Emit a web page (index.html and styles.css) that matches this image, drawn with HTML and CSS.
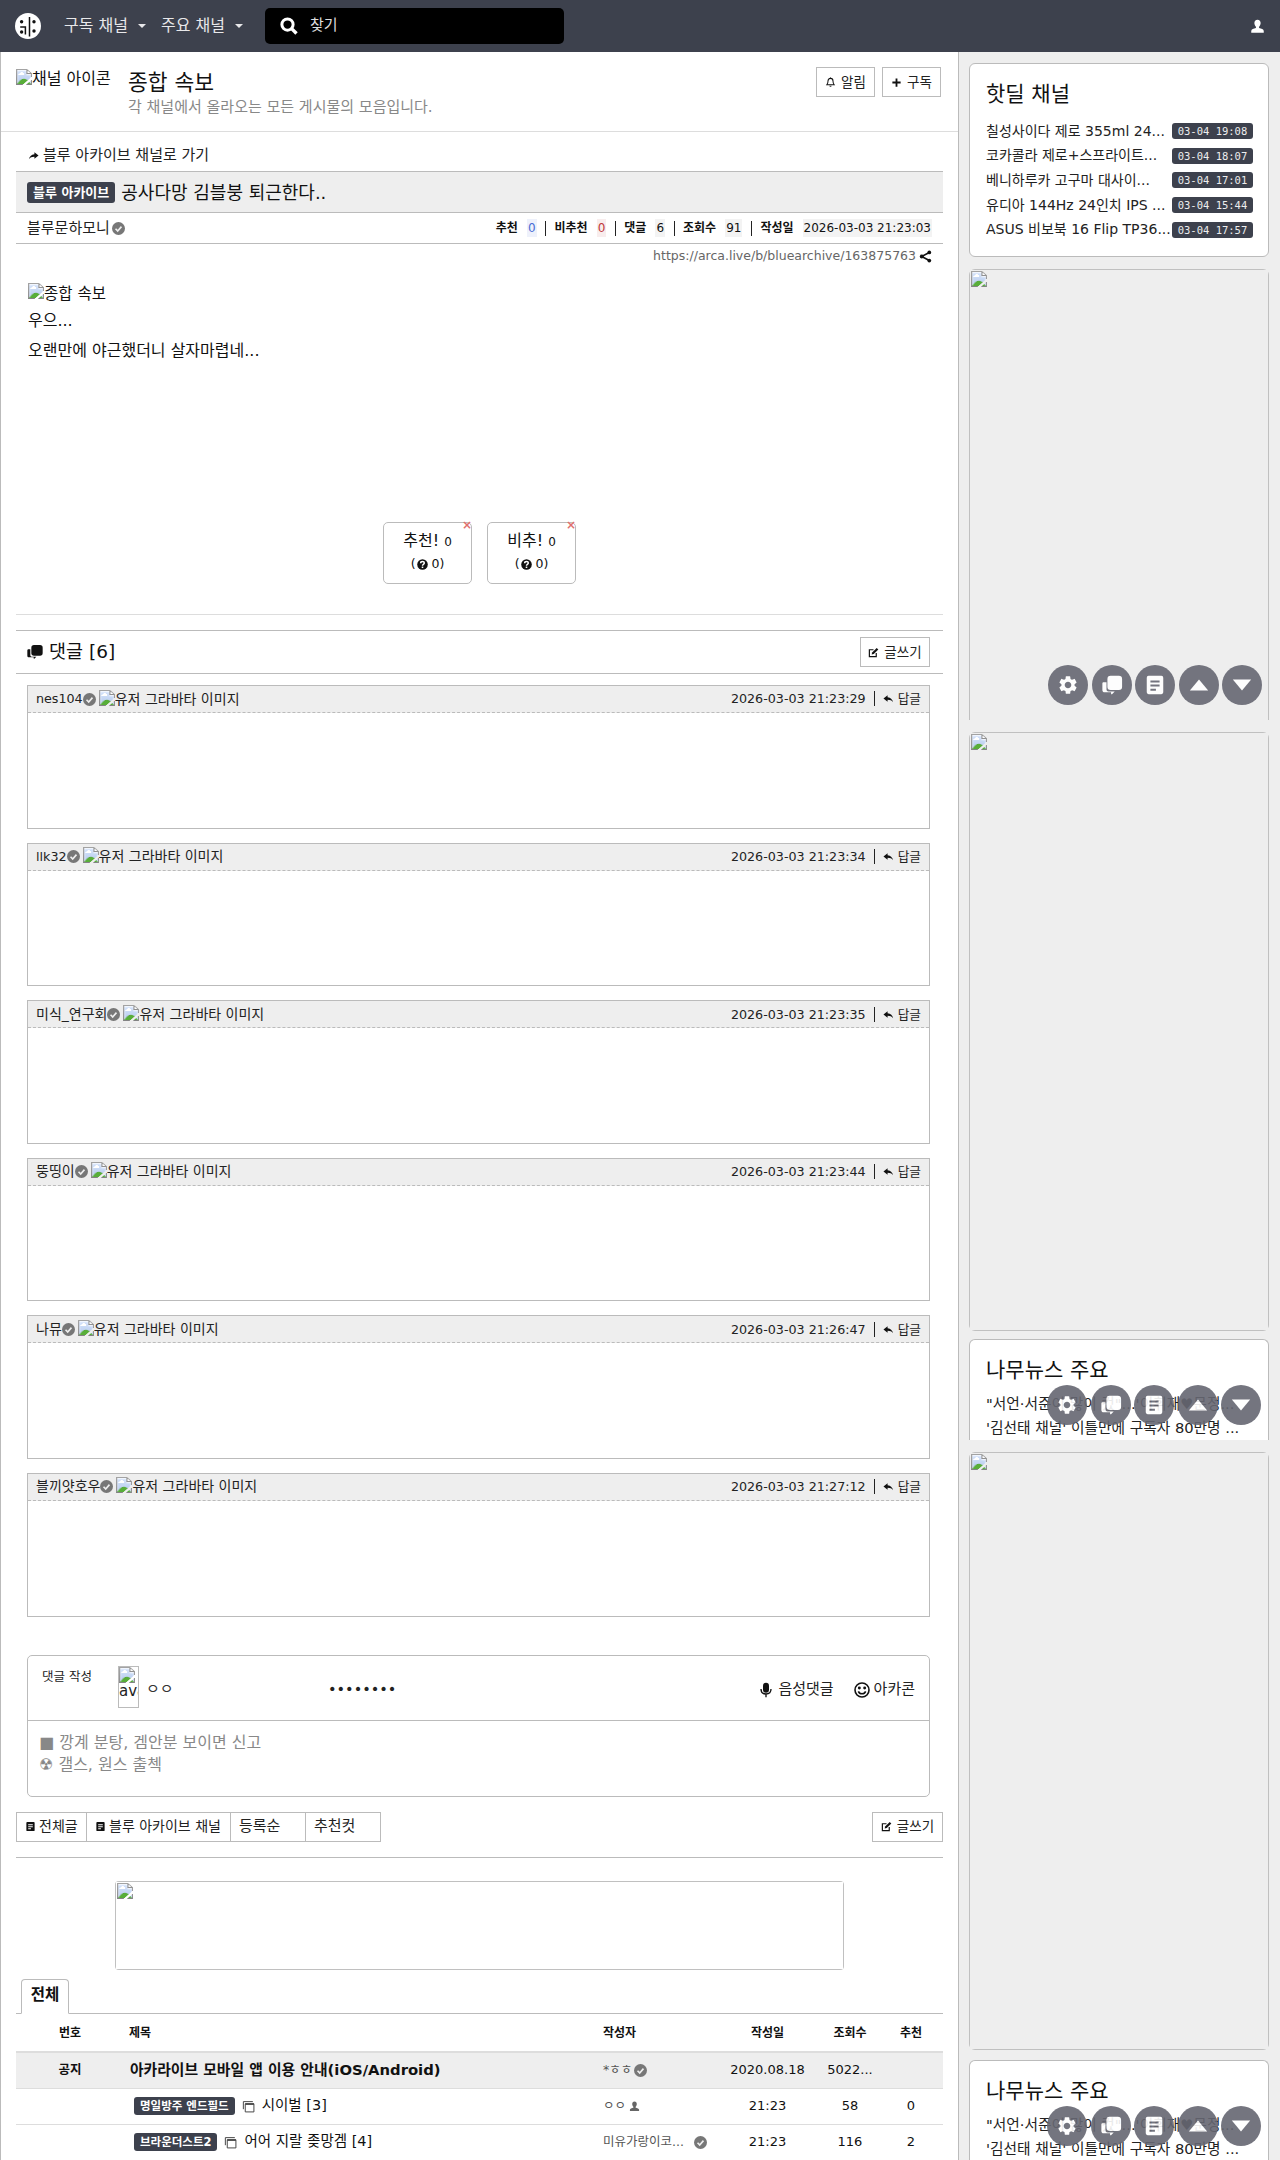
FILE: index.html
```html
<!DOCTYPE html>
<html lang="ko">
<head>
<meta charset="utf-8">
<title>공사다망 김블붕 퇴근한다..</title>
<link rel="stylesheet" href="styles.css">
</head>
<body>
<svg class="sprite" xmlns="http://www.w3.org/2000/svg">
  <symbol id="i-check" viewBox="0 0 24 24"><circle cx="12" cy="12" r="12" fill="#777"/><path d="M6.5 12.5l4 4 7-8" fill="none" stroke="#eee" stroke-width="3"/></symbol>
  <symbol id="i-gear" viewBox="0 0 24 24"><path fill="currentColor" d="M19.14 12.94c.04-.3.06-.61.06-.94 0-.32-.02-.64-.07-.94l2.03-1.58a.49.49 0 0 0 .12-.61l-1.92-3.32a.488.488 0 0 0-.59-.22l-2.39.96c-.5-.38-1.03-.7-1.62-.94l-.36-2.54a.484.484 0 0 0-.48-.41h-3.84c-.24 0-.43.17-.47.41l-.36 2.54c-.59.24-1.13.57-1.62.94l-2.39-.96c-.22-.08-.47 0-.59.22L2.74 8.87c-.12.21-.08.47.12.61l2.03 1.58c-.05.3-.09.63-.09.94s.02.64.07.94l-2.03 1.58a.49.49 0 0 0-.12.61l1.92 3.32c.12.22.37.29.59.22l2.39-.96c.5.38 1.03.7 1.62.94l.36 2.54c.05.24.24.41.48.41h3.84c.24 0 .44-.17.47-.41l.36-2.54c.59-.24 1.13-.56 1.62-.94l2.39.96c.22.08.47 0 .59-.22l1.92-3.32c.12-.22.07-.47-.12-.61l-2.01-1.58zM12 15.6c-1.98 0-3.6-1.62-3.6-3.6s1.62-3.6 3.6-3.6 3.6 1.62 3.6 3.6-1.62 3.6-3.6 3.6z"/></symbol>
  <symbol id="i-doc" viewBox="0 0 24 24"><path fill="currentColor" fill-rule="evenodd" d="M5 2h14a2 2 0 0 1 2 2v16a2 2 0 0 1-2 2H5a2 2 0 0 1-2-2V4a2 2 0 0 1 2-2zm2 5v2.200h10V7H7zm0 4.500v2.200h10v-2.200H7zm0 4.500v2.200h6V16H7z"/></symbol>
  <symbol id="i-up" viewBox="0 0 24 24"><path fill="currentColor" d="M12 6l10 12H2z"/></symbol>
  <symbol id="i-down" viewBox="0 0 24 24"><path fill="currentColor" d="M12 18L2 6h20z"/></symbol>
  <symbol id="i-user" viewBox="0 0 24 24"><path fill="currentColor" d="M12 1c3.300 0 5 2.500 5 5.500 0 2.500-1 4.500-2.500 5.800v2.200c3.500.8 7.500 2 7.500 4.500v3H2v-3c0-2.500 4-3.700 7.500-4.500v-2.200C8 11 7 9 7 6.500 7 3.500 8.700 1 12 1z"/></symbol>
  <symbol id="i-reply" viewBox="0 0 24 24"><path fill="currentColor" d="M10 5L1 12l9 7v-4.500c6 0 9 1.500 12 5.500-1-6-5-10-12-11z"/></symbol>
  <symbol id="i-forward" viewBox="0 0 24 24"><path fill="currentColor" d="M14 5l9 7-9 7v-4.500c-6 0-9 1.500-12 5.500 1-6 5-10 12-11z"/></symbol>
  <symbol id="i-edit" viewBox="0 0 24 24"><path fill="none" stroke="currentColor" stroke-width="2.600" d="M18 13v8H3V6h9"/><path fill="currentColor" d="M9 12L19 2l3.500 3.500-10 10L8 16.500z"/></symbol>
  <symbol id="i-share" viewBox="0 0 24 24"><path fill="none" stroke="currentColor" stroke-width="3" d="M19 4.500L5 12l14 7.500"/><circle cx="19" cy="4.500" r="3.500" fill="currentColor"/><circle cx="5" cy="12" r="3.500" fill="currentColor"/><circle cx="19" cy="19.500" r="3.500" fill="currentColor"/></symbol>
  <symbol id="i-bell" viewBox="0 0 24 24"><path fill="none" stroke="currentColor" stroke-width="2.200" d="M12 3c-3.500 0-5.500 2.500-5.500 6 0 4-1 6-2.500 8h16c-1.500-2-2.500-4-2.500-8 0-3.500-2-6-5.500-6z"/><path fill="currentColor" d="M9.500 19h5a2.500 2.500 0 0 1-5 0zM11 1h2v2h-2z"/></symbol>
  <symbol id="i-plus" viewBox="0 0 24 24"><path fill="currentColor" d="M10 3h4v7h7v4h-7v7h-4v-7H3v-4h7z"/></symbol>
  <symbol id="i-chat" viewBox="0 0 24 24"><path fill="currentColor" d="M3 9h3v8c0 1.200.8 2 2 2h7l-3 3c-.5.400-1 .2-1-.5V20H4c-1.500 0-2.500-1-2.500-2.500V10.500C1.500 9.500 2 9 3 9z"/><rect x="7" y="2" width="16" height="15.500" rx="3.500" fill="currentColor"/></symbol>
  <symbol id="i-help" viewBox="0 0 24 24"><circle cx="12" cy="12" r="11.500" fill="currentColor"/><path fill="none" stroke="#fff" stroke-width="3.200" d="M8 9c0-2.500 2-3.500 4-3.500s4 1.200 4 3.300c0 3-4 3-4 5.700"/><rect x="10.300" y="16.500" width="3.400" height="3.200" fill="#fff"/></symbol>
  <symbol id="i-mic" viewBox="0 0 24 24"><rect x="7.500" y="1" width="9" height="15" rx="4.500" fill="currentColor"/><path fill="none" stroke="currentColor" stroke-width="2" d="M4.500 10.500c0 5 3 7.500 7.500 7.500s7.500-2.500 7.500-7.500M12 18v5"/></symbol>
  <symbol id="i-smile" viewBox="0 0 24 24"><circle cx="12" cy="12" r="10.500" fill="none" stroke="currentColor" stroke-width="2.400"/><circle cx="8" cy="9" r="2.200" fill="currentColor"/><circle cx="16" cy="9" r="2.200" fill="currentColor"/><path fill="none" stroke="currentColor" stroke-width="2.400" d="M6.500 14c1 2.500 3 3.700 5.500 3.700s4.500-1.200 5.500-3.700"/></symbol>
  <symbol id="i-comment-stack" viewBox="0 0 24 24"><path fill="currentColor" d="M2.500 8H5v9c0 1.200.8 2 2 2h7l-3 3c-.5.400-1 .2-1-.5V20H3c-1.500 0-2.500-1-2.500-2.500V10C.5 8.700 1.300 8 2.500 8z"/><rect x="6.500" y="1.500" width="17" height="16" rx="4" fill="currentColor"/></symbol>
  <symbol id="i-frames" viewBox="0 0 24 24"><path fill="none" stroke="currentColor" stroke-width="1.800" d="M6 7h16v15H6zM2.500 17V3H20"/><path fill="currentColor" d="M6 6h16v3H6z"/></symbol>
  <symbol id="i-search" viewBox="0 0 24 24"><circle cx="10" cy="10" r="7.500" fill="none" stroke="currentColor" stroke-width="4"/><path d="M15.500 15.500L22 22" stroke="currentColor" stroke-width="4.500"/></symbol>
  <symbol id="i-logo" viewBox="0 0 26 26"><circle cx="13" cy="13" r="13" fill="#fff"/><path fill="none" stroke="#111" stroke-width="1.500" d="M14.500 4v19.500M5.200 13.900h5.200v7.600"/><circle cx="6.600" cy="8.700" r="1.700" fill="#111"/><circle cx="6.600" cy="19" r="1.700" fill="#111"/><circle cx="19" cy="8.700" r="1.700" fill="#111"/><circle cx="19" cy="18" r="1.700" fill="#111"/></symbol>
</svg>

<nav class="topbar">
  <svg class="logo"><use href="#i-logo"/></svg>
  <a class="nav-link">구독 채널<span class="caret"></span></a>
  <a class="nav-link">주요 채널<span class="caret"></span></a>
  <div class="search"><svg class="search-icon"><use href="#i-search"/></svg><span>찾기</span></div>
  <svg class="nav-user"><use href="#i-user"/></svg>
</nav>

<div class="layout">
  <main class="main">
    <header class="board-head">
      <img class="board-icon" src="missing-icon.png" alt="채널 아이콘">
      <div class="board-text">
        <div class="board-title">종합 속보</div>
        <div class="board-desc">각 채널에서 올라오는 모든 게시물의 모음입니다.</div>
      </div>
      <div class="board-actions">
        <a class="btn btn-head"><svg class="ico"><use href="#i-bell"/></svg>알림</a>
        <a class="btn btn-head"><svg class="ico"><use href="#i-plus"/></svg>구독</a>
      </div>
    </header>

    <div class="back-link"><svg class="ico"><use href="#i-forward"/></svg>블루 아카이브 채널로 가기</div>

    <div class="post-title"><span class="badge">블루 아카이브</span><span>공사다망 김블붕 퇴근한다..</span></div>
    <div class="post-info">
      <div class="post-author">블루문하모니<svg class="check"><use href="#i-check"/></svg></div>
      <div class="post-stats">
        <b>추천</b><span class="num num-up">0</span><i class="sep"></i>
        <b>비추천</b><span class="num num-down">0</span><i class="sep"></i>
        <b>댓글</b><span class="num">6</span><i class="sep"></i>
        <b>조회수</b><span class="num">91</span><i class="sep"></i>
        <b>작성일</b><span class="num">2026-03-03 21:23:03</span>
      </div>
    </div>
    <div class="post-url">https://arca.live/b/bluearchive/163875763<svg class="ico share"><use href="#i-share"/></svg></div>

    <article class="post-body">
      <img class="post-img" src="missing-post.png" alt="종합 속보">
      <p>우으...</p>
      <p>오랜만에 야근했더니 살자마렵네...</p>
    </article>

    <div class="votes">
      <div class="vote"><span class="vote-x">×</span><div class="vote-main">추천! <small>0</small></div><div class="vote-sub">(<svg class="help"><use href="#i-help"/></svg>0)</div></div>
      <div class="vote"><span class="vote-x">×</span><div class="vote-main">비추! <small>0</small></div><div class="vote-sub">(<svg class="help"><use href="#i-help"/></svg>0)</div></div>
    </div>

    <hr class="rule-light">

    <div class="comment-head">
      <div class="comment-title"><svg class="ico-lg"><use href="#i-comment-stack"/></svg>댓글 [6]</div>
      <a class="btn btn-write"><svg class="ico"><use href="#i-edit"/></svg>글쓰기</a>
    </div>

    <section class="comments">
      <div class="comment"><div class="comment-bar"><span class="c-name">nes104</span><svg class="check"><use href="#i-check"/></svg><img class="c-avatar" src="missing-a1.png" alt="유저 그라바타 이미지"><span class="c-right">2026-03-03 21:23:29<i class="sep"></i><svg class="ico"><use href="#i-reply"/></svg>답글</span></div></div>
      <div class="comment"><div class="comment-bar"><span class="c-name">llk32</span><svg class="check"><use href="#i-check"/></svg><img class="c-avatar" src="missing-a2.png" alt="유저 그라바타 이미지"><span class="c-right">2026-03-03 21:23:34<i class="sep"></i><svg class="ico"><use href="#i-reply"/></svg>답글</span></div></div>
      <div class="comment"><div class="comment-bar"><span class="c-name c-name-ko">미식_연구회</span><svg class="check"><use href="#i-check"/></svg><img class="c-avatar" src="missing-a3.png" alt="유저 그라바타 이미지"><span class="c-right">2026-03-03 21:23:35<i class="sep"></i><svg class="ico"><use href="#i-reply"/></svg>답글</span></div></div>
      <div class="comment"><div class="comment-bar"><span class="c-name c-name-ko">뚱띵이</span><svg class="check"><use href="#i-check"/></svg><img class="c-avatar" src="missing-a4.png" alt="유저 그라바타 이미지"><span class="c-right">2026-03-03 21:23:44<i class="sep"></i><svg class="ico"><use href="#i-reply"/></svg>답글</span></div></div>
      <div class="comment"><div class="comment-bar"><span class="c-name c-name-ko">나뮤</span><svg class="check"><use href="#i-check"/></svg><img class="c-avatar" src="missing-a5.png" alt="유저 그라바타 이미지"><span class="c-right">2026-03-03 21:26:47<i class="sep"></i><svg class="ico"><use href="#i-reply"/></svg>답글</span></div></div>
      <div class="comment"><div class="comment-bar"><span class="c-name c-name-ko">블끼얏호우</span><svg class="check"><use href="#i-check"/></svg><img class="c-avatar" src="missing-a6.png" alt="유저 그라바타 이미지"><span class="c-right">2026-03-03 21:27:12<i class="sep"></i><svg class="ico"><use href="#i-reply"/></svg>답글</span></div></div>
    </section>

    <section class="editor">
      <div class="editor-top">
        <span class="editor-label">댓글 작성</span>
        <img class="editor-avatar" src="missing-av.png" alt="avatar">
        <span class="editor-nick">ㅇㅇ</span>
        <span class="editor-dots">••••••••</span>
        <span class="editor-tool"><svg class="ico-md"><use href="#i-mic"/></svg>음성댓글</span>
        <span class="editor-tool"><svg class="ico-md"><use href="#i-smile"/></svg>아카콘</span>
      </div>
      <div class="editor-body">
        <div>■ 깡계 분탕, 겜안분 보이면 신고</div>
        <div>☢ 갤스, 원스 출첵</div>
      </div>
    </section>

    <div class="list-tools">
      <a class="tool tool-a"><svg class="ico"><use href="#i-doc"/></svg>전체글</a>
      <a class="tool tool-b"><svg class="ico"><use href="#i-doc"/></svg>블루 아카이브 채널</a>
      <a class="tool tool-c">등록순</a>
      <a class="tool tool-c">추천컷</a>
      <a class="btn btn-write tools-write"><svg class="ico"><use href="#i-edit"/></svg>글쓰기</a>
    </div>

    <hr class="rule-mid">

    <div class="banner"><img src="missing-banner.png"></div>

    <div class="tabs"><span class="tab">전체</span></div>

    <div class="table">
      <div class="row row-head"><span class="cell-c">번호</span><span class="cell-t">제목</span><span class="cell-a">작성자</span><span class="cell-c">작성일</span><span class="cell-c">조회수</span><span class="cell-c">추천</span></div>
      <div class="row row-notice"><span class="cell-c cell-bold">공지</span><span class="cell-t cell-notice">아카라이브 모바일 앱 이용 안내(iOS/Android)</span><span class="cell-a">*ㅎㅎ<svg class="check"><use href="#i-check"/></svg></span><span class="cell-c">2020.08.18</span><span class="cell-c">5022...</span><span class="cell-c"></span></div>
      <div class="row"><span class="cell-c"></span><span class="cell-t"><span class="badge badge-row">명일방주 엔드필드</span><svg class="ico-row"><use href="#i-frames"/></svg>시이벌 [3]</span><span class="cell-a">ㅇㅇ<svg class="ico user-mini"><use href="#i-user"/></svg></span><span class="cell-c">21:23</span><span class="cell-c">58</span><span class="cell-c">0</span></div>
      <div class="row"><span class="cell-c"></span><span class="cell-t"><span class="badge badge-row">브라운더스트2</span><svg class="ico-row"><use href="#i-frames"/></svg>어어 지랄 좆망겜 [4]</span><span class="cell-a">미유가랑이코...<svg class="check check-far"><use href="#i-check"/></svg></span><span class="cell-c">21:23</span><span class="cell-c">116</span><span class="cell-c">2</span></div>
    </div>
  </main>

  <aside class="side">
    <div class="card card-deal">
      <h3 class="card-title">핫딜 채널</h3>
      <div class="deal"><span class="deal-t">칠성사이다 제로 355ml 24...</span><span class="deal-d">03-04 19:08</span></div>
      <div class="deal"><span class="deal-t">코카콜라 제로+스프라이트...</span><span class="deal-d">03-04 18:07</span></div>
      <div class="deal"><span class="deal-t">베니하루카 고구마 대사이...</span><span class="deal-d">03-04 17:01</span></div>
      <div class="deal"><span class="deal-t">유디아 144Hz 24인치 IPS ...</span><span class="deal-d">03-04 15:44</span></div>
      <div class="deal"><span class="deal-t">ASUS 비보북 16 Flip TP36...</span><span class="deal-d">03-04 17:57</span></div>
    </div>

    <div class="card card-ad card-ad-a"><img src="missing-ad1.png">
      <div class="fabs"><span class="fab"><svg><use href="#i-gear"/></svg></span><span class="fab"><svg><use href="#i-chat"/></svg></span><span class="fab"><svg><use href="#i-doc"/></svg></span><span class="fab"><svg><use href="#i-up"/></svg></span><span class="fab"><svg><use href="#i-down"/></svg></span></div>
    </div>
    <div class="card card-ad card-ad-b"><img src="missing-ad2.png"></div>

    <div class="card card-news">
      <h3 class="card-title">나무뉴스 주요</h3>
      <div class="news">"서언·서준이 많이 컸"...'이휘재♥문정...</div>
      <div class="news">'김선태 채널' 이틀만에 구독자 80만명 ...</div>
      <div class="fabs"><span class="fab"><svg><use href="#i-gear"/></svg></span><span class="fab"><svg><use href="#i-chat"/></svg></span><span class="fab"><svg><use href="#i-doc"/></svg></span><span class="fab"><svg><use href="#i-up"/></svg></span><span class="fab"><svg><use href="#i-down"/></svg></span></div>
    </div>

    <div class="card card-ad card-ad-c"><img src="missing-ad3.png"></div>

    <div class="card card-news card-news-last">
      <h3 class="card-title">나무뉴스 주요</h3>
      <div class="news">"서언·서준이 많이 컸"...'이휘재♥문정...</div>
      <div class="news">'김선태 채널' 이틀만에 구독자 80만명 ...</div>
      <div class="fabs"><span class="fab"><svg><use href="#i-gear"/></svg></span><span class="fab"><svg><use href="#i-chat"/></svg></span><span class="fab"><svg><use href="#i-doc"/></svg></span><span class="fab"><svg><use href="#i-up"/></svg></span><span class="fab"><svg><use href="#i-down"/></svg></span></div>
    </div>
  </aside>
</div>
</body>
</html>
```

FILE: styles.css
```css
* { box-sizing: border-box; }
html, body { margin: 0; padding: 0; }
body {
  height: 2160px;
  overflow: hidden;
  background: #eee;
  color: #111;
  font-family: "DejaVu Sans", "Noto Sans CJK KR", sans-serif;
  font-size: 14px;
  line-height: 1.5;
}
.sprite { display: none; }
svg { flex: none; }

/* top bar */
.topbar {
  height: 52px;
  background: #3d414d;
  color: #fff;
  display: flex;
  align-items: center;
  padding-left: 15px;
}
.logo { width: 26px; height: 26px; margin-right: 23px; }
.nav-link { display: flex; align-items: center; font-size: 16px; color: #e8e8ea; margin-right: 15px; }
.caret {
  width: 0; height: 0; margin-left: 10px; margin-top: -1px;
  border-left: 4px solid transparent; border-right: 4px solid transparent; border-top: 4px solid #e8e8ea;
}
.search {
  width: 299px; height: 36px; margin-left: 7px;
  background: #000; border-radius: 5px;
  display: flex; align-items: center; padding-left: 15px;
  font-size: 15px; color: #ddd;
}
.search span { margin-top: -2px; }
.search-icon { width: 18px; height: 18px; color: #fff; margin-right: 12px; }
.nav-user { width: 15px; height: 15px; color: #fff; margin-left: auto; margin-right: 15px; }

/* layout */
.layout { display: flex; align-items: flex-start; height: 2108px; }
.main {
  width: 959px; height: 2108px; flex: none;
  background: #fff;
  border-left: 1px solid #bbb; border-right: 1px solid #bbb;
  padding: 0 15px;
  overflow: hidden;
}
.side { flex: 1; padding: 11px 11px 0 10px; min-width: 0; }

/* board header */
.board-head {
  height: 80px; margin: 0 -15px; padding: 14px 15px 0;
  border-bottom: 1px solid #ddd;
  display: flex; align-items: flex-start;
}
.board-icon { width: 95px; height: 20px; overflow: hidden; font-size: 16px; line-height: 20px; display: block; margin-top: 3px; }
.board-text { margin-left: 17px; }
.board-title { font-size: 21.500px; line-height: 28px; margin-top: 3px; }
.board-desc { font-size: 15px; line-height: 20px; color: #888; white-space: nowrap; }
.board-actions { margin-left: auto; display: flex; gap: 7px; margin-top: 1px; margin-right: 2px; }
.btn {
  height: 30px; border: 1px solid #bbb; background: #fff;
  display: inline-flex; align-items: center; justify-content: center;
  font-size: 13.500px; color: #222;
}
.btn-head { width: 59px; }
.btn .ico { margin-right: 5px; }
.ico { width: 11px; height: 11px; color: #111; }
.ico-lg { width: 16px; height: 16px; color: #111; margin-right: 6px; }
.ico-md { width: 16px; height: 16px; color: #111; margin-right: 4px; }

.back-link { height: 39px; padding: 7px 0 0 12px; display: flex; align-items: center; font-size: 15px; color: #222; }
.back-link .ico { margin-right: 4px; }

.post-title {
  height: 42px; background: #eee;
  border-top: 1px solid #bbb; border-bottom: 1px solid #bbb;
  display: flex; align-items: center; padding-left: 11px;
  font-size: 18px;
}
.badge {
  background: #3d414d; color: #fff; font-size: 13px; font-weight: 700;
  height: 21px; line-height: 21px; border-radius: 3px; padding: 0 6px;
  margin-right: 6px; display: inline-block; white-space: nowrap;
}
.post-info {
  height: 31px; border-bottom: 1px solid #bbb;
  display: flex; align-items: center; justify-content: space-between;
  padding: 0 11px;
  font-size: 15px;
}
.post-author { display: flex; align-items: center; color: #222; }
.check { width: 13px; height: 13px; margin-left: 2px; }
.post-stats { display: flex; align-items: center; font-size: 12px; }
.post-stats b { font-weight: 700; font-size: 12px; }
.num { margin-left: 9px; background: #f3f3f3; padding: 0 1px; }
.num-up { color: #4a6cd4; background: #eef1fb; }
.num-down { color: #c0393b; background: #f8eded; }
.sep { display: inline-block; width: 1px; height: 15px; background: #222; margin: 0 8.500px; }

.post-url { height: 25px; display: flex; align-items: center; justify-content: flex-end; padding-right: 11px; font-size: 12.500px; color: #666; }
.share { width: 13px; height: 13px; margin-left: 3px; }

.post-body { padding: 14px 12px 0; height: 253px; font-size: 16px; }
.post-img { display: block; height: 22px; line-height: 22px; font-size: 15.500px; margin-bottom: 5px; }
.post-body p { margin: 0 0 9px; line-height: 21px; }

.votes { display: flex; justify-content: center; gap: 15px; height: 62px; }
.vote {
  width: 89px; height: 62px; position: relative;
  border: 1px solid #bbb; border-radius: 5px;
  text-align: center;
  padding-top: 6px;
}
.vote-main { font-size: 16px; line-height: 24px; }
.vote-main small { font-size: 12px; }
.vote-sub { font-size: 12.500px; line-height: 20px; display: flex; justify-content: center; align-items: center; }
.help { width: 11px; height: 11px; color: #111; margin: 0 4px 0 1px; }
.vote-x { position: absolute; top: -7px; right: -1px; color: #e0716e; font-size: 12px; line-height: 18px; font-weight: 700; }

.rule-light { height: 1px; border: 0; background: #ddd; margin: 30px 0 0; }
.comment-head {
  margin-top: 15px; height: 44px;
  border-top: 1px solid #bbb; border-bottom: 1px solid #bbb;
  display: flex; align-items: center; justify-content: space-between;
  padding: 0 13px 0 11px;
}
.comment-title { display: flex; align-items: center; font-size: 18.500px; }
.btn-write { width: 70px; }

.comments { padding: 11px 13px 0 11px; }
.comment { height: 143.600px; border: 1px solid #bbb; margin-bottom: 14px; background: #fff; }
.comment-bar {
  height: 27px; background: #eee; border-bottom: 1px dashed #bbb;
  display: flex; align-items: center; padding: 0 8px;
  font-size: 13px; color: #222; white-space: nowrap;
}
.comment-bar .check { margin-left: 0; }
.c-name { font-size: 12.700px; }
.c-name-ko { font-size: 14px; }
.c-avatar { height: 19px; margin-left: 3px; font-size: 14px; line-height: 19px; }
.c-right { margin-left: auto; display: flex; align-items: center; font-size: 12.700px; }
.c-right .sep { margin: 0 8px; }
.c-right .ico { margin-right: 4px; }

.editor {
  margin: 38px 13px 0 11px; height: 142px;
  border: 1px solid #bbb; border-radius: 5px;
}
.editor-top {
  height: 65px; border-bottom: 1px solid #bbb;
  display: flex; align-items: center; position: relative;
  padding: 4px 14px 0; font-size: 12px; color: #222;
}
.editor-label { font-size: 12.500px; width: 76px; align-self: flex-start; margin-top: 8px; }
.editor-avatar { width: 21px; height: 42px; border: 1px solid #bbb; font-size: 15px; line-height: 16px; overflow: hidden; display: block; align-self: flex-start; margin-top: 6px; }
.editor-nick { margin-left: 7px; width: 182px; font-size: 15px; color: #333; }
.editor-dots { font-size: 14.500px; flex: 1; color: #222; }
.editor-tool { display: flex; align-items: center; margin-left: 20px; font-size: 15px; }
.editor-body { padding: 11px 11px 0; font-size: 16px; line-height: 22px; color: #888; }

.list-tools { display: flex; height: 30px; margin-top: 15px; }
.tool {
  height: 30px; border: 1px solid #bbb; margin-right: -1px;
  display: flex; align-items: center; font-size: 14px; padding-left: 8px; color: #222; white-space: nowrap;
}
.tool .ico { margin-right: 3px; }
.tool-a { width: 71px; }
.tool-b { width: 145px; }
.tool-c { width: 76px; font-size: 15px; }
.tools-write { margin-left: auto; width: 71px; }

.rule-mid { height: 1px; border: 0; background: #bbb; margin: 15px 0 0; }
.banner {
  width: 729px; height: 89px; margin: 23px 0 0 99px;
  border-radius: 4px; overflow: hidden; display: block;
}
.banner img { display: block; width: 100%; height: 100%; }

.tabs { height: 44px; border-bottom: 1px solid #bbb; padding-left: 5px; display: flex; align-items: flex-end; }
.tab {
  width: 48px; height: 35px; margin-bottom: -1px;
  border: 1px solid #bbb; border-bottom-color: #fff; border-radius: 4px 4px 0 0; background: #fff;
  display: flex; align-items: center; justify-content: center;
  font-weight: 700; font-size: 15.500px;
}

.row {
  display: grid; grid-template-columns: 108px 474px 117px 105px 60px 62px;
  height: 36px; align-items: center;
  border-bottom: 1px solid #ddd;
  font-size: 13px;
}
.row-head { height: 39px; padding-top: 2px; font-size: 12px; font-weight: 700; border-bottom: 2px solid #ddd; }
.row-notice { background: #eee; }
.cell-c { text-align: center; }
.cell-bold { font-weight: 700; font-size: 12.500px; }
.cell-t { padding-left: 5px; display: flex; align-items: center; white-space: nowrap; font-size: 14.500px; }
.row-head .cell-t, .row-head .cell-a { font-weight: 700; font-size: 12px; color: #111; }
.cell-notice { font-weight: 700; font-size: 14.800px; padding-left: 6px; }
.cell-a { padding-left: 5px; font-size: 12.500px; color: #555; display: flex; align-items: center; white-space: nowrap; }
.badge-row { height: 18px; line-height: 18px; font-size: 11.500px; margin: 0 7px 0 5px; padding: 0 6px; }
.ico-row { width: 13px; height: 13px; color: #444; margin-right: 7px; }
.user-mini { margin-left: 3px; color: #666; }
.check-far { margin-left: 10px; }

/* sidebar */
.card {
  width: 300px; background: #fff; border: 1px solid #bbb; border-radius: 6px;
  position: relative; margin-bottom: 12px;
}
.card-deal { height: 194px; padding: 17px 16px 0; }
.card-title { margin: 0; font-size: 21px; font-weight: 400; line-height: 26px; margin-bottom: 12px; }
.deal { display: flex; align-items: center; justify-content: space-between; height: 24.600px; font-size: 14px; white-space: nowrap; }
.deal-t { color: #222; }
.deal-d {
  flex: none; width: 81px; height: 16px; line-height: 16px; border-radius: 3px;
  background: #3d414d; color: #eee; text-align: center;
  font-family: "DejaVu Sans Mono", monospace; font-size: 10.500px; margin-right: -1px;
}
.card-ad { background: #eee; border: 0; overflow: hidden; }
.card-ad img { display: block; width: 100%; height: 100%; }
.card-ad-a { height: 451px; border-radius: 6px 6px 0 0; }
.card-ad-a img { height: 500px; }
.card-ad-b { height: 599px; margin-bottom: 8px; }
.card-news { height: 101px; padding: 17px 16px 0; border-bottom: 0; border-radius: 6px 6px 0 0; overflow: hidden; }
.card-ad-c { height: 598px; margin-bottom: 10px; }
.news { font-size: 14.700px; height: 24px; line-height: 24px; white-space: nowrap; color: #222; }
.card-news .card-title { margin-bottom: 9px; }

.fabs { position: absolute; right: 7px; bottom: 15px; display: flex; gap: 3.500px; }
.fab {
  width: 40px; height: 40px; border-radius: 50%;
  background: #666772; opacity: .9; color: #fff;
  display: flex; align-items: center; justify-content: center;
}
.fab svg { width: 22px; height: 22px; color: #fff; }
```
